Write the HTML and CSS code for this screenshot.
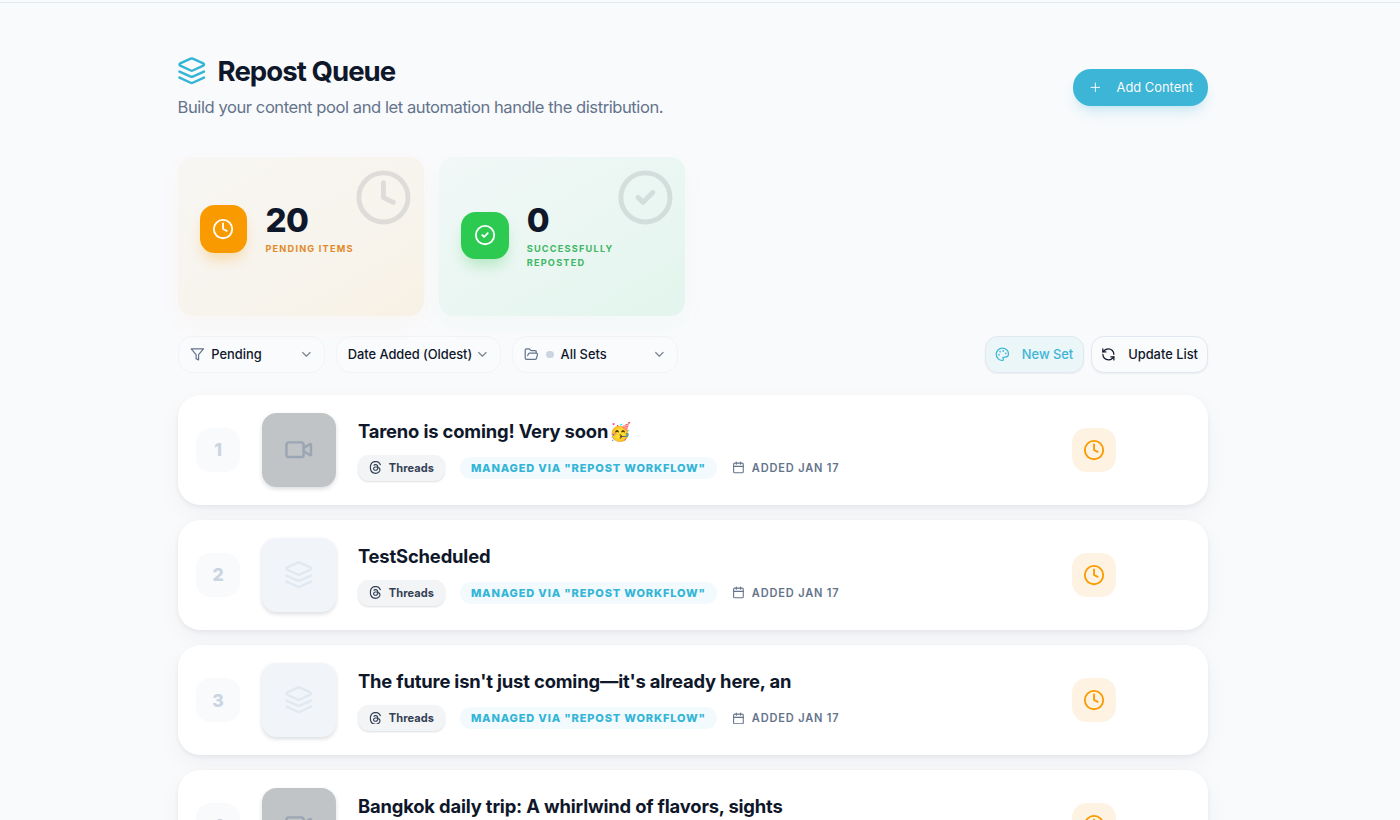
FILE: index.html
```html
<!DOCTYPE html>
<html lang="en">
<head>
  <meta charset="UTF-8">
  <title>Repost Queue</title>
  <link rel="stylesheet" href="styles.css">
</head>
<body>
  <svg class="sprite">
    <symbol id="layers" viewBox="0 0 24 24">
      <path d="m12.83 2.18a2 2 0 0 0-1.66 0L2.6 6.08a1 1 0 0 0 0 1.83l8.58 3.91a2 2 0 0 0 1.66 0l8.58-3.9a1 1 0 0 0 0-1.83Z"/>
      <path d="m22 17.65-9.17 4.16a2 2 0 0 1-1.66 0L2 17.65"/>
      <path d="m22 12.65-9.17 4.16a2 2 0 0 1-1.66 0L2 12.65"/>
    </symbol>
    <symbol id="clock" viewBox="0 0 24 24">
      <circle cx="12" cy="12" r="10"/>
      <path d="M12 6v6l4 2"/>
    </symbol>
    <symbol id="check" viewBox="0 0 24 24">
      <circle cx="12" cy="12" r="10"/>
      <path d="m9 12 2 2 4-4"/>
    </symbol>
    <symbol id="plus" viewBox="0 0 24 24">
      <path d="M5 12h14M12 5v14"/>
    </symbol>
    <symbol id="filter" viewBox="0 0 24 24">
      <path d="M22 3H2l8 9.46V19l4 2v-8.54L22 3z"/>
    </symbol>
    <symbol id="chevron" viewBox="0 0 24 24">
      <path d="m6 9 6 6 6-6"/>
    </symbol>
    <symbol id="folder" viewBox="0 0 24 24">
      <path d="m6 14 1.5-2.9A2 2 0 0 1 9.24 10H20a2 2 0 0 1 1.94 2.5l-1.54 6a2 2 0 0 1-1.95 1.5H4a2 2 0 0 1-2-2V5a2 2 0 0 1 2-2h3.9a2 2 0 0 1 1.69.9l.81 1.2a2 2 0 0 0 1.67.9H18a2 2 0 0 1 2 2v2"/>
    </symbol>
    <symbol id="palette" viewBox="0 0 24 24">
      <circle cx="13.5" cy="6.5" r=".5"/>
      <circle cx="17.5" cy="10.5" r=".5"/>
      <circle cx="8.5" cy="7.5" r=".5"/>
      <circle cx="6.5" cy="12.5" r=".5"/>
      <path d="M12 2C6.5 2 2 6.5 2 12s4.5 10 10 10c.926 0 1.648-.746 1.648-1.688 0-.437-.18-.835-.437-1.125-.29-.289-.438-.652-.438-1.125a1.64 1.64 0 0 1 1.668-1.668h1.996c3.051 0 5.555-2.503 5.555-5.554C21.965 6.012 17.461 2 12 2z"/>
    </symbol>
    <symbol id="refresh" viewBox="0 0 24 24">
      <path d="M21 12a9 9 0 0 0-9-9 9.75 9.75 0 0 0-6.74 2.74L3 8"/>
      <path d="M3 3v5h5"/>
      <path d="M3 12a9 9 0 0 0 9 9 9.75 9.75 0 0 0 6.74-2.74L21 16"/>
      <path d="M16 16h5v5"/>
    </symbol>
    <symbol id="video" viewBox="0 0 24 24">
      <path d="m16 13 5.223 3.482a.5.5 0 0 0 .777-.416V7.87a.5.5 0 0 0-.752-.432L16 10.5"/>
      <rect x="2" y="6" width="14" height="12" rx="2"/>
    </symbol>
    <symbol id="calendar" viewBox="0 0 24 24">
      <path d="M8 2v4M16 2v4M3 10h18"/>
      <rect x="3" y="4" width="18" height="18" rx="2"/>
    </symbol>
    <symbol id="threads" viewBox="0 0 16 16">
      <path d="M6.321 6.016c-.27-.18-1.166-.802-1.166-.802.756-1.081 1.753-1.502 3.132-1.502.975 0 1.803.327 2.394.948s.928 1.509 1.005 2.644q.492.207.905.484c1.109.745 1.719 1.86 1.719 3.137 0 2.716-2.226 5.075-6.256 5.075C4.594 16 1 13.987 1 7.994 1 2.034 4.482 0 8.044 0 9.69 0 13.55.243 15 5.036l-1.36.353C12.516 1.974 10.163 1.43 8.006 1.43c-3.565 0-5.582 2.171-5.582 6.79 0 4.143 2.254 6.343 5.63 6.343 2.777 0 4.847-1.443 4.847-3.556 0-1.438-1.208-2.127-1.27-2.127-.236 1.234-.868 3.31-3.644 3.31-1.618 0-3.013-1.118-3.013-2.582 0-2.09 1.984-2.847 3.55-2.847.586 0 1.294.04 1.663.114 0-.637-.54-1.728-1.9-1.728-1.25 0-1.566.405-1.967.868ZM8.716 8.19c-2.04 0-2.304.87-2.304 1.416 0 .878 1.043 1.168 1.6 1.168 1.02 0 2.067-.282 2.232-2.423a6.2 6.2 0 0 0-1.528-.161"/>
    </symbol>
  </svg>

  <div class="topbar"></div>

  <main class="container">
    <header class="page-header">
      <div>
        <h1><svg class="icon"><use href="#layers"/></svg>Repost Queue</h1>
        <p>Build your content pool and let automation handle the distribution.</p>
      </div>
      <button class="add-btn"><svg class="icon"><use href="#plus"/></svg>Add Content</button>
    </header>

    <section class="stats">
      <div class="stat pending">
        <svg class="icon watermark"><use href="#clock"/></svg>
        <div class="stat-icon"><svg class="icon"><use href="#clock"/></svg></div>
        <div class="stat-text">
          <div class="stat-value">20</div>
          <div class="stat-label">Pending Items</div>
        </div>
      </div>
      <div class="stat reposted">
        <svg class="icon watermark"><use href="#check"/></svg>
        <div class="stat-icon"><svg class="icon"><use href="#check"/></svg></div>
        <div class="stat-text">
          <div class="stat-value">0</div>
          <div class="stat-label">Successfully Reposted</div>
        </div>
      </div>
    </section>

    <section class="toolbar">
      <button class="select status-select"><svg class="icon"><use href="#filter"/></svg><span>Pending</span><svg class="icon chevron"><use href="#chevron"/></svg></button>
      <button class="select sort-select"><span>Date Added (Oldest)</span><svg class="icon chevron"><use href="#chevron"/></svg></button>
      <button class="select"><svg class="icon"><use href="#folder"/></svg><i class="dot"></i><span>All Sets</span><svg class="icon chevron"><use href="#chevron"/></svg></button>
      <div class="actions">
        <button class="action new-set"><svg class="icon"><use href="#palette"/></svg>New Set</button>
        <button class="action update"><svg class="icon"><use href="#refresh"/></svg>Update List</button>
      </div>
    </section>

    <section id="queue"></section>
  </main>

  <script src="queue.js"></script>
</body>
</html>
```
FILE: styles.css
```css
* {
  box-sizing: border-box;
}

html {
  font-size: 14.72px;
}

body {
  margin: 0;
  padding-right: 14.4px;
  height: 100vh;
  overflow: hidden;
  background: #f9fafc;
  color: #0f172a;
  font-family: Inter, "Liberation Sans", sans-serif;
}

button {
  font: inherit;
  color: inherit;
  cursor: pointer;
}

.sprite {
  display: none;
}

.icon {
  flex: none;
  width: 1rem;
  height: 1rem;
  fill: none;
  stroke: currentColor;
  stroke-width: 2;
  stroke-linecap: round;
  stroke-linejoin: round;
}

.topbar {
  height: 3px;
  margin-right: -14.4px;
  border-bottom: 1px solid #e2e8f0;
}

.container {
  width: 70rem;
  margin: 0 auto;
}

.page-header {
  display: flex;
  justify-content: space-between;
  align-items: center;
  padding: 50px 0 0;
}

h1 {
  display: flex;
  align-items: center;
  gap: .75rem;
  margin: 0;
  font-size: 1.875rem;
  line-height: 2.5rem;
  font-weight: 750;
  letter-spacing: -.035em;
}

h1 .icon {
  width: 2rem;
  height: 2rem;
  margin: -1px 0 0 -.5px;
  color: #33b5d6;
}

.page-header p {
  margin: 5px 0 2px;
  font-size: 1.125rem;
  line-height: 1.75rem;
  letter-spacing: -.43px;
  color: #64748b;
}

.add-btn {
  display: flex;
  align-items: center;
  gap: 14px;
  height: 2.5rem;
  margin-top: -1px;
  padding: 0 15px;
  border: 0;
  border-radius: 18px;
  background: #3db5d6;
  box-shadow: 0 9px 14px -3px rgba(61, 181, 214, .2), 0 4px 6px -4px rgba(61, 181, 214, .2);
  color: #f8fafc;
  font-size: .875rem;
}

.add-btn .icon {
  stroke-width: 1.6;
}

.stats {
  display: grid;
  grid-template-columns: repeat(4, 1fr);
  gap: 1rem;
  margin-top: 34px;
}

.stat {
  position: relative;
  display: flex;
  align-items: flex-start;
  height: 159px;
  padding: 45px 22px 0;
  border-radius: 1rem;
}

.pending {
  background: linear-gradient(150deg, #f8f6f3, #f7f4ed 60%, #f8f1e4);
  box-shadow: 0 9px 24px rgba(247, 154, 0, .035);
}

.reposted {
  background: linear-gradient(150deg, #f1f8f7, #e9f6f1 60%, #e2f5ed);
  box-shadow: 0 9px 24px rgba(45, 200, 80, .035);
}

.watermark {
  position: absolute;
  top: 11.4px;
  right: 11px;
  width: 4rem;
  height: 4rem;
  color: #0f172a;
  opacity: .1;
}

.stat-icon {
  display: grid;
  place-items: center;
  width: 3.25rem;
  height: 3.25rem;
  border-radius: 1rem;
  margin-top: 3.5px;
  margin-right: 18px;
  color: #fff;
}

.stat-icon .icon {
  width: 1.5rem;
  height: 1.5rem;
}

.pending .stat-icon {
  background: #f99b00;
  box-shadow: 0 9px 14px -3px rgba(249, 155, 0, .3);
}

.reposted .stat-icon {
  margin-top: 10px;
  background: #2dca52;
  box-shadow: 0 9px 14px -3px rgba(45, 202, 82, .3);
}

.stat-text {
  flex: 1;
}

.stat-value {
  font-size: 2.25rem;
  line-height: 2.5rem;
  font-weight: 820;
  letter-spacing: -.02em;
}

.stat-label {
  width: 110px;
  margin-top: 3.5px;
  font-size: .625rem;
  line-height: 13.8px;
  font-weight: 700;
  letter-spacing: .13em;
  text-transform: uppercase;
}

.pending .stat-label {
  color: #e28a28;
}

.reposted .stat-label {
  color: #40b765;
}

.toolbar {
  display: flex;
  gap: .75rem;
  margin-top: 20.5px;
}

.select {
  display: flex;
  align-items: center;
  gap: 7px;
  width: 11.25rem;
  height: 2.5rem;
  padding: 0 10.5px 0 11px;
  border: 1px solid #f1f4f8;
  border-radius: 1rem;
  background: rgba(255, 255, 255, .2);
  font-size: .875rem;
  font-weight: 500;
  white-space: nowrap;
}

.status-select {
  width: 10rem;
}

.select .icon {
  color: #64748b;
}

.select .chevron {
  margin-left: auto;
  color: #7f8794;
}

.sort-select {
  gap: 3px;
  letter-spacing: -.05px;
}

.sort-select .chevron {
  margin-left: 0;
}

.dot {
  width: 7.4px;
  height: 7.4px;
  border-radius: 50%;
  background: #cbd5e1;
}

.actions {
  display: flex;
  gap: .5rem;
  margin-left: auto;
}

.action {
  display: flex;
  align-items: center;
  gap: 12px;
  height: 2.5rem;
  padding: 0 9px;
  border: 1px solid #e2e8f0;
  border-radius: .875rem;
  background: #fafbfd;
  box-shadow: 0 1px 2px rgba(15, 23, 42, .06);
  font-size: .875rem;
  font-weight: 500;
}

.new-set {
  padding-right: 9.8px;
  background: #ebf6f9;
  color: #3db5d6;
}

#queue {
  display: grid;
  gap: 1rem;
  margin-top: 21.8px;
}

.item {
  display: flex;
  align-items: center;
  gap: 1.5rem;
  height: 7.5rem;
  padding: 0 1.25rem;
  border-radius: 1.5rem;
  background: #fff;
  box-shadow: 0 9px 24px rgba(15, 23, 42, .04), 0 2px 5px rgba(15, 23, 42, .06);
}

.order {
  display: grid;
  place-items: center;
  width: 3rem;
  height: 3rem;
  border-radius: 1rem;
  background: #f9fafc;
  color: #cbd5e1;
  font-size: 1.2rem;
  font-weight: 800;
}

.thumb {
  display: grid;
  place-items: center;
  width: 5rem;
  height: 5rem;
  border-radius: 1rem;
  background: #f1f5f9;
  box-shadow: 0 2px 4px rgba(15, 23, 42, .15);
  color: #e2e8f0;
}

.thumb.has-video {
  background: #c0c4c7;
  color: #9ca5b3;
}

.thumb .icon {
  width: 2rem;
  height: 2rem;
}

.item h3 {
  margin: 0 0 10px;
  font-size: 1.25rem;
  line-height: 1.75rem;
  font-weight: 650;
  letter-spacing: -.17px;
}

.emoji {
  margin-left: -3px;
  font-size: 1.2rem;
}

.meta {
  display: flex;
  align-items: center;
  gap: 1rem;
}

.platform {
  display: flex;
  align-items: center;
  gap: 7px;
  height: 26px;
  padding: 0 11px;
  border-radius: .75rem;
  background: #f3f4f6;
  box-shadow: 0 1px 2px rgba(15, 23, 42, .14);
  color: #334155;
  font-size: .75rem;
  font-weight: 650;
  letter-spacing: .1px;
}

.platform .icon {
  width: .875rem;
  height: .875rem;
  fill: currentColor;
  stroke: none;
}

.managed {
  padding: 0 11px;
  border-radius: .75rem;
  background: #f2fafd;
  color: #33b5d6;
  font-size: .75rem;
  line-height: 22px;
  font-weight: 800;
  letter-spacing: .076em;
  text-transform: uppercase;
}

.added {
  display: flex;
  align-items: center;
  gap: 7.4px;
  color: #64748b;
  font-size: .75rem;
  font-weight: 600;
  letter-spacing: .075em;
  text-transform: uppercase;
}

.added .icon {
  width: .875rem;
  height: .875rem;
}

.state {
  display: grid;
  place-items: center;
  width: 3rem;
  height: 3rem;
  margin-left: auto;
  margin-right: 5rem;
  border-radius: 1rem;
  background: #fef3e2;
  color: #f99b00;
}

.state .icon {
  width: 1.5rem;
  height: 1.5rem;
}
```
FILE: queue.js
```javascript
let items = [
  { title: "Tareno is coming! Very soon <span class=\"emoji\">🥳</span>", video: true },
  { title: "TestScheduled", video: false },
  { title: "The future isn't just coming—it's already here, an", video: false },
  { title: "Bangkok daily trip: A whirlwind of flavors, sights", video: true }
]

let queue = document.querySelector("#queue")

function icon(name) {
  return `<svg class="icon"><use href="#${name}"/></svg>`
}

items.forEach(function (item, index) {
  queue.innerHTML += `
    <article class="item">
      <div class="order">${index + 1}</div>
      <div class="thumb${item.video ? " has-video" : ""}">${icon(item.video ? "video" : "layers")}</div>
      <div>
        <h3>${item.title}</h3>
        <div class="meta">
          <span class="platform">${icon("threads")}Threads</span>
          <span class="managed">Managed via "Repost Workflow"</span>
          <span class="added">${icon("calendar")}Added Jan 17</span>
        </div>
      </div>
      <div class="state">${icon("clock")}</div>
    </article>`
})
```
